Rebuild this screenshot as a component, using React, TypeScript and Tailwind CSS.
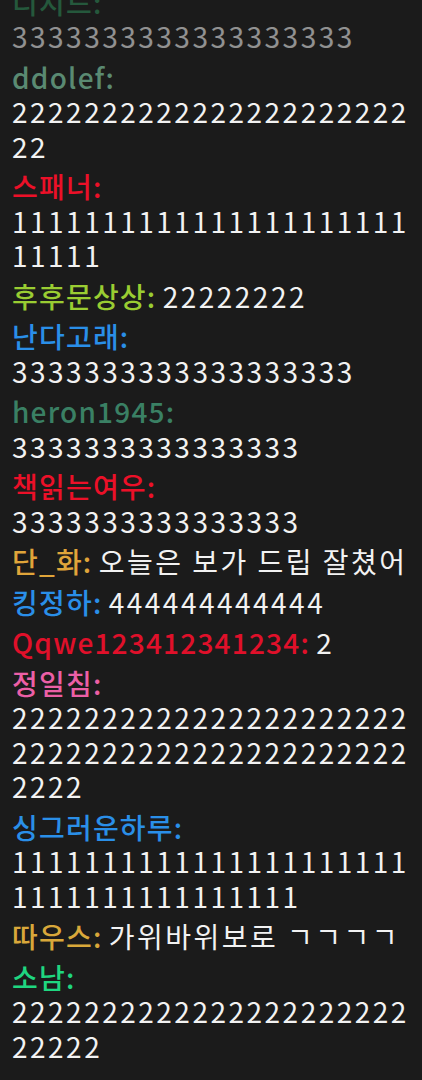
import React from 'react';

type Msg = { name: string; color: string; text: string; faded?: boolean };

const MESSAGES: Msg[] = [
  { name: '디지드', color: 'text-[#2e8b57]', text: '3333333333333333333', faded: true },
  { name: 'ddolef', color: 'text-[#5a8a72]', text: '222222222222222222222222' },
  { name: '스패너', color: 'text-[#ec1028]', text: '111111111111111111111111111' },
  { name: '후후문상상', color: 'text-[#9acd32]', text: '22222222' },
  { name: '난다고래', color: 'text-[#2a8fe8]', text: '3333333333333333333' },
  { name: 'heron1945', color: 'text-[#3a8064]', text: '3333333333333333' },
  { name: '책읽는여우', color: 'text-[#ec1028]', text: '3333333333333333' },
  { name: '단_화', color: 'text-[#e0a53a]', text: '오늘은 보가 드립 잘쳤어' },
  { name: '킹정하', color: 'text-[#2a8fe8]', text: '444444444444' },
  { name: 'Qqwe123412341234', color: 'text-[#e0102a]', text: '2' },
  { name: '정일침', color: 'text-[#ec5fa6]', text: '222222222222222222222222222222222222222222222222' },
  { name: '싱그러운하루', color: 'text-[#2a8fe8]', text: '11111111111111111111111111111111111111' },
  { name: '따우스', color: 'text-[#d9a83a]', text: '가위바위보로 ㄱㄱㄱㄱ' },
  { name: '소남', color: 'text-[#1fd680]', text: '222222222222222222222222222' },
];

export default function App() {
  return (
    <div
      className="h-[1080px] overflow-hidden bg-[#1b1b1b] flex flex-col justify-end pl-3 pr-2 pb-[17px]"
      style={{ fontFamily: '"Noto Sans CJK KR", "Noto Sans", sans-serif' }}
    >
      {MESSAGES.map((m, idx) => (
        <p
          key={idx}
          className={`text-[28px] leading-[34.5px] break-words mt-[6px] ${m.faded ? 'opacity-55' : ''}`}
        >
          <span className={`${m.color} font-medium tracking-[1.2px]`}>{m.name}:</span>{' '}
          <span className="text-[#f2f2f2] tracking-[2.5px]">{m.text}</span>
        </p>
      ))}
    </div>
  );
}
